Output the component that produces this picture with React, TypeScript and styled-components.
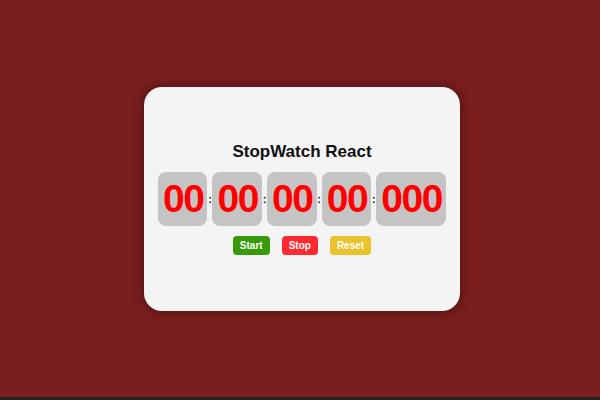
import React from "react";
import styled, { createGlobalStyle } from "styled-components";

const Global = createGlobalStyle`
  html, body { margin: 0; padding: 0; background: #222225; }
  body { font-family: "Liberation Sans", Arial, sans-serif; }
`;

const Page = styled.div`
  height: 397px;
  background: #7a1e1e;
  display: flex;
  align-items: center;
  justify-content: center;
  padding-left: 4px;
  box-sizing: border-box;
`;

const BottomStrip = styled.div`
  height: 3px;
  background: #232326;
`;

const Card = styled.div`
  width: 316px;
  height: 224px;
  background: #f4f4f4;
  border-radius: 18px;
  box-shadow: 0 0 12px rgba(0, 0, 0, 0.45);
  display: flex;
  flex-direction: column;
  align-items: center;
  justify-content: center;
`;

const Title = styled.h1`
  margin: 0 0 10px;
  font-size: 17px;
  font-weight: bold;
  color: #111;
  line-height: normal;
`;

const Display = styled.div`
  display: flex;
  align-items: center;
`;

const Unit = styled.div`
  background: #c4c4c4;
  border-radius: 8px;
  padding: 4px 4px 4px 5px;
  font-size: 39px;
  line-height: 46px;
  font-weight: bold;
  color: #ff0000;
  letter-spacing: -1.4px;
  text-align: center;
`;

const Colon = styled.span`
  width: 5px;
  text-align: center;
  font-size: 11px;
  font-weight: bold;
  color: #111;
`;

const Controls = styled.div`
  display: flex;
  gap: 12px;
  margin-top: 10px;
`;

const Button = styled.button<{ $bg: string }>`
  background: ${(p) => p.$bg};
  color: #fff;
  border: none;
  border-radius: 4px;
  padding: 4px 7px;
  font-family: "Liberation Sans", Arial, sans-serif;
  font-size: 10px;
  line-height: 11px;
  font-weight: bold;
  cursor: pointer;
`;

const units = ["00", "00", "00", "00", "000"];

export default function App() {
  return (
    <>
      <Global />
      <Page>
        <Card>
          <Title>StopWatch React</Title>
          <Display>
            {units.map((u, i) => (
              <React.Fragment key={i}>
                {i > 0 && <Colon>:</Colon>}
                <Unit>{u}</Unit>
              </React.Fragment>
            ))}
          </Display>
          <Controls>
            <Button $bg="#389a08">Start</Button>
            <Button $bg="#ff2a2f">Stop</Button>
            <Button $bg="#eac22b">Reset</Button>
          </Controls>
        </Card>
      </Page>
      <BottomStrip />
    </>
  );
}
